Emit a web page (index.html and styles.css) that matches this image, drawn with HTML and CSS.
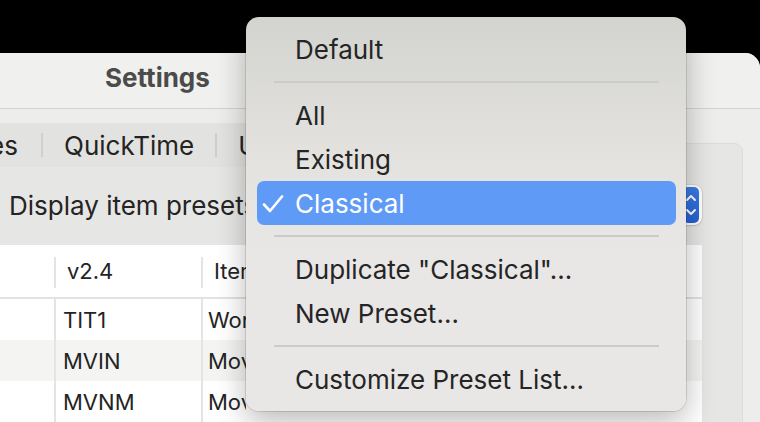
FILE: index.html
```html
<!DOCTYPE html>
<html>
<head>
<meta charset="utf-8">
<link rel="stylesheet" href="styles.css">
</head>
<body>
<div class="window">
  <div class="titlebar">Settings</div>
  <div class="tabs">
    <div class="tab tab-cut">es</div>
    <div class="tab-sep"></div>
    <div class="tab">QuickTime</div>
    <div class="tab-sep"></div>
    <div class="tab">Use</div>
  </div>
  <div class="box">
    <div class="preset-row">
      <span class="label">Display item presets</span>
      <div class="popup">
        <span class="popup-value">Classical</span>
        <span class="popup-cap">
          <svg width="16" height="36" viewBox="0 0 16 36"><path d="M4 13 L8 9 L12 13 M4 23 L8 27 L12 23" fill="none" stroke="#fff" stroke-width="2" stroke-linecap="round" stroke-linejoin="round"/></svg>
        </span>
      </div>
    </div>
    <div class="table">
      <div class="row head">
        <div class="cell c1"></div>
        <div class="cell c2"><span class="hsep"></span>v2.4</div>
        <div class="cell c3"><span class="hsep"></span><span class="clip">Item</span></div>
      </div>
      <div class="row">
        <div class="cell c1"></div>
        <div class="cell c2">TIT1</div>
        <div class="cell c3"><span class="clip">Work</span></div>
      </div>
      <div class="row alt">
        <div class="cell c1"></div>
        <div class="cell c2">MVIN</div>
        <div class="cell c3"><span class="clip">Movement Number</span></div>
      </div>
      <div class="row">
        <div class="cell c1"></div>
        <div class="cell c2">MVNM</div>
        <div class="cell c3"><span class="clip">Movement Name</span></div>
      </div>
    </div>
  </div>
</div>

<div class="menu">
  <div class="item">Default</div>
  <div class="sep"></div>
  <div class="item">All</div>
  <div class="item">Existing</div>
  <div class="item selected"><svg class="check" width="22" height="18" viewBox="0 0 22 18"><path d="M2 9.5 L8 16 L20 1.5" fill="none" stroke="#fff" stroke-width="2.6" stroke-linecap="round" stroke-linejoin="round"/></svg>Classical</div>
  <div class="sep"></div>
  <div class="item">Duplicate "Classical"…</div>
  <div class="item">New Preset…</div>
  <div class="sep"></div>
  <div class="item">Customize Preset List…</div>
</div>
</body>
</html>
```
FILE: styles.css
```css
html, body {
  margin: 0;
  padding: 0;
}
body {
  width: 760px;
  height: 422px;
  overflow: hidden;
  background: #000;
  font-family: Inter, "Noto Sans", sans-serif;
  color: #242424;
  position: relative;
}
.window {
  margin-top: 53px;
  height: 369px;
  background: #edeeeb;
  border-top-right-radius: 15px;
  overflow: hidden;
}
.titlebar {
  height: 56px;
  box-sizing: border-box;
  border-bottom: 1px solid #d3d4d1;
  background: #f0f1ee;
  display: flex;
  align-items: center;
  padding: 0 0 6px 105px;
  font-size: 26px;
  font-weight: 700;
  color: #4b4b4b;
}
.tabs {
  position: relative;
  z-index: 2;
  margin-top: 14px;
  height: 44px;
  width: 520px;
  background: #e2e3e0;
  border-radius: 0 10px 10px 0;
  display: flex;
  align-items: center;
  font-size: 26px;
  color: #232323;
}
.tab {
  padding: 0 21px;
  white-space: nowrap;
}
.tab-cut {
  width: 41px;
  box-sizing: border-box;
  padding: 0 23px 0 0;
  display: flex;
  justify-content: flex-end;
  overflow: hidden;
}
.tab-sep {
  width: 2px;
  height: 24px;
  background: #cfd0cd;
}
.box {
  margin: -24px 17px 0 -10px;
  padding-top: 24px;
  background: #e6e6e4;
  border: 1px solid #dcdcda;
  border-top-right-radius: 9px;
  height: 300px;
}
.preset-row {
  display: flex;
  align-items: center;
  height: 40px;
  padding: 17px 40px 20px 18px;
}
.label {
  font-size: 26px;
  flex: 1;
  white-space: nowrap;
}
.popup {
  width: 300px;
  height: 40px;
  box-sizing: border-box;
  background: #fff;
  border-radius: 8px;
  box-shadow: 0 0 0 1px rgba(0,0,0,0.06), 0 1px 2px rgba(0,0,0,0.12);
  display: flex;
  align-items: center;
  justify-content: space-between;
  padding: 2px 3px 2px 14px;
  font-size: 26px;
}
.popup-cap {
  width: 16px;
  height: 36px;
  border-radius: 5px;
  background: linear-gradient(#3b7be6, #2561d4);
  display: flex;
}
.table {
  margin-right: 40px;
  background: #fff;
  height: 200px;
}
.row {
  display: flex;
  height: 41px;
  font-size: 22px;
}
.row.head {
  height: 54px;
  border-bottom: 2px solid #e2e2e2;
  box-sizing: border-box;
}
.row.alt {
  background: #f4f5f3;
}
.cell {
  display: flex;
  align-items: center;
  position: relative;
  white-space: nowrap;
  overflow: hidden;
  box-sizing: border-box;
}
.c1 { width: 63px; }
.c2 {
  width: 147px;
  border-left: 2px solid #e4e4e4;
  padding-left: 7px;
}
.c3 {
  flex: 1;
  border-left: 2px solid #e4e4e4;
  padding-left: 5px;
}
.head .c2, .head .c3 {
  border-left: 0;
  padding-left: 13px;
}
.clip {
  display: block;
  max-width: 38px;
  overflow: hidden;
}
.head .clip { max-width: 32px; }
.hsep {
  position: absolute;
  left: 0;
  top: 12px;
  width: 2px;
  height: 31px;
  background: #e4e4e4;
}

.menu {
  position: absolute;
  z-index: 10;
  left: 246px;
  top: 17px;
  width: 440px;
  height: 394px;
  box-sizing: border-box;
  padding: 10px 10px 10px 11px;
  border-radius: 13px;
  background: linear-gradient(#d3d3d0 0%, #e3e2df 35%, #e8e7e5 60%, #e8e7e5 100%);
  box-shadow: 0 0 0 1px rgba(0,0,0,0.12), 0 10px 30px rgba(0,0,0,0.28);
  font-size: 26px;
  color: #252525;
}
.item {
  height: 44px;
  display: flex;
  align-items: center;
  padding-left: 38px;
  border-radius: 7px;
  position: relative;
  white-space: nowrap;
}
.item.selected {
  background: #5f9bf6;
  color: #fff;
}
.check {
  position: absolute;
  left: 5px;
  top: 14px;
}
.sep {
  height: 22px;
  display: flex;
  align-items: center;
  padding: 0 17px;
}
.sep::before {
  content: "";
  flex: 1;
  height: 2px;
  background: #cbcbc8;
}
```
